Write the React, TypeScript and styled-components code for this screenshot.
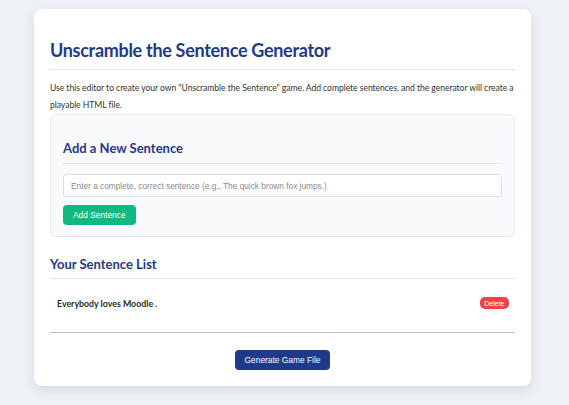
import React from 'react'
import styled, { createGlobalStyle } from 'styled-components'

const GlobalStyle = createGlobalStyle`
  html, body {
    margin: 0;
    padding: 0;
    background: #eef2f7;
  }
  body {
    font-family: Lato, 'Noto Sans', sans-serif;
    color: #333;
  }
`

const Page = styled.div`
  padding: 9px 0 20px 34px;
`

const Card = styled.main`
  width: 497px;
  box-sizing: border-box;
  padding: 16px;
  background: #ffffff;
  border-radius: 8px;
  box-shadow: 0 4px 12px rgba(30, 41, 59, 0.12);
`

const Title = styled.h1`
  margin: 13px 0 0;
  padding-bottom: 7px;
  font-size: 18px;
  line-height: 24px;
  letter-spacing: -0.3px;
  font-weight: 700;
  color: #1e3a8a;
  border-bottom: 1px solid #dde5f0;
`

const Intro = styled.p`
  margin: 10px 0 0;
  font-size: 8.6px;
  line-height: 17px;
  letter-spacing: -0.05px;
  color: #333;
`

const Panel = styled.section`
  padding: 12px 12px 11px;
  background: #f8fafc;
  border: 1px solid #e5e9f0;
  border-radius: 6px;
`

const SectionTitle = styled.h2<{ $inset?: boolean }>`
  margin: ${(p) => (p.$inset ? '12px 0 10px' : '18px 0 0')};
  padding-bottom: ${(p) => (p.$inset ? '6px' : '5px')};
  font-size: 13px;
  line-height: 18px;
  font-weight: 700;
  color: #1e3a8a;
  border-bottom: 1px solid #dfe6ef;
`

const Input = styled.input`
  display: block;
  width: 100%;
  box-sizing: border-box;
  height: 23px;
  padding: 0 7px;
  border: 1px solid #d9dee7;
  border-radius: 3px;
  background: #fff;
  font-family: 'Liberation Sans', Arial, sans-serif;
  font-size: 8.3px;
  color: #333;
  outline: none;
  &::placeholder {
    color: #8a8a8a;
  }
`

const Button = styled.button<{ $tone: 'green' | 'blue' | 'red' }>`
  display: block;
  border: none;
  border-radius: ${(p) => (p.$tone === 'red' ? '5px' : '4px')};
  font-family: 'Liberation Sans', Arial, sans-serif;
  color: #fff;
  cursor: pointer;
  background: ${(p) =>
    p.$tone === 'green' ? '#10b981' : p.$tone === 'red' ? '#ef4444' : '#1e3a8a'};
  font-size: ${(p) => (p.$tone === 'red' ? '7px' : '8.4px')};
  height: ${(p) => (p.$tone === 'red' ? '12px' : '20px')};
  padding: ${(p) => (p.$tone === 'red' ? '0 4.5px' : '0 10px')};
`

const AddRow = styled.div`
  display: flex;
  margin-top: 8px;
`

const List = styled.ul`
  list-style: none;
  margin: 0;
  padding: 0;
  border-bottom: 1px solid #bdbdbd;
`

const Item = styled.li`
  display: flex;
  align-items: center;
  justify-content: space-between;
  padding: 18px 6px 23px 7px;
  font-size: 8.8px;
  font-weight: 700;
  color: #2b2b2b;
`

const Footer = styled.div`
  display: flex;
  justify-content: center;
  padding-top: 17px;
`

export default function App() {
  return (
    <>
      <GlobalStyle />
      <Page>
        <Card>
          <Title>Unscramble the Sentence Generator</Title>
          <Intro>
            Use this editor to create your own "Unscramble the Sentence" game. Add complete
            sentences, and the generator will create a playable HTML file.
          </Intro>
          <Panel>
            <SectionTitle $inset>Add a New Sentence</SectionTitle>
            <Input placeholder="Enter a complete, correct sentence (e.g., The quick brown fox jumps.)" />
            <AddRow>
              <Button $tone="green">Add Sentence</Button>
            </AddRow>
          </Panel>
          <SectionTitle>Your Sentence List</SectionTitle>
          <List>
            <Item>
              <span>Everybody loves Moodle .</span>
              <Button $tone="red">Delete</Button>
            </Item>
          </List>
          <Footer>
            <Button $tone="blue">Generate Game File</Button>
          </Footer>
        </Card>
      </Page>
    </>
  )
}
